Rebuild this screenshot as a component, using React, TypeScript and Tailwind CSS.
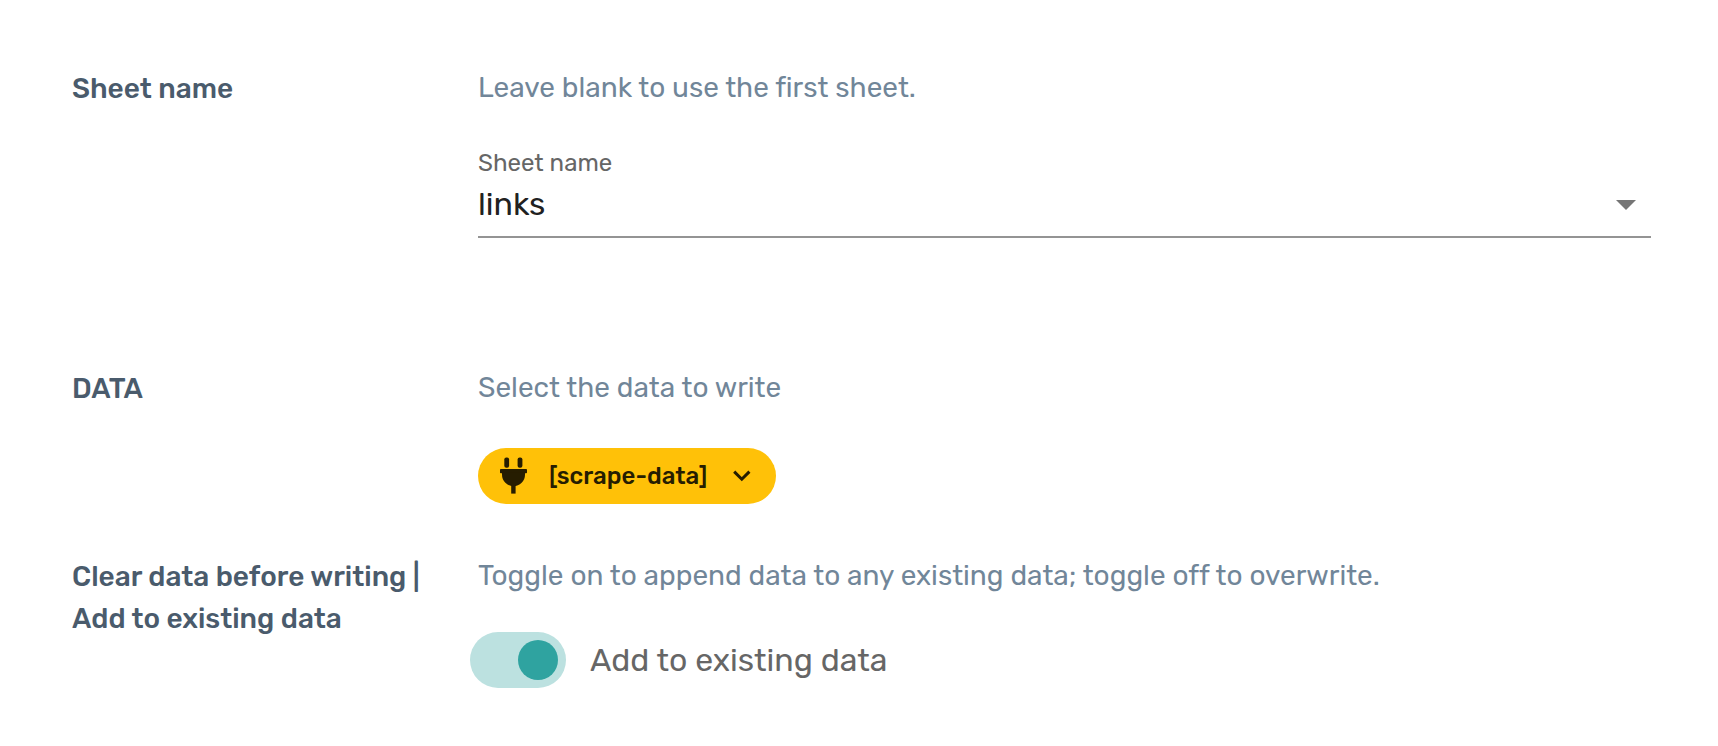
import { useState } from 'react'
import type { ReactNode } from 'react'

function PlugIcon() {
  return (
    <svg width="28" height="38" viewBox="0 0 28 38" fill="currentColor" aria-hidden="true">
      <rect x="4.3" y="0.5" width="4.8" height="10.2" rx="2" />
      <rect x="17.6" y="0.5" width="4.8" height="10.2" rx="2" />
      <rect x="0" y="12" width="27" height="4.2" rx="0.8" />
      <path d="M2 15.5h23v2.2A11.5 11.5 0 0 1 13.5 29.2 11.5 11.5 0 0 1 2 17.7z" />
      <rect x="11.2" y="28" width="4.4" height="8.6" />
    </svg>
  )
}

function ChevronIcon() {
  return (
    <svg className="ml-auto" width="18" height="12" viewBox="0 0 18 12" fill="none" aria-hidden="true">
      <path d="M1.2 1.6 8.8 9.2l7.6-7.6" stroke="currentColor" strokeWidth="3" />
    </svg>
  )
}

function SettingRow({ title, hint, children }: { title: ReactNode; hint: string; children: ReactNode }) {
  return (
    <section className="grid grid-cols-[360px_1fr] gap-x-[46px]">
      <h2 className="text-[28px] leading-[42px] font-medium text-[#4a5b6c]">{title}</h2>
      <div>
        <p className="text-[28px] leading-10 text-[#718699] [font-variant-ligatures:none]">{hint}</p>
        {children}
      </div>
    </section>
  )
}

export default function App() {
  const [sheet, setSheet] = useState('links')
  const [append, setAppend] = useState(true)

  return (
    <main className="flex flex-col bg-white pt-[68px] pr-[67px] pb-14 pl-[72px] font-[Rubik,Roboto,sans-serif]">
      <SettingRow title="Sheet name" hint="Leave blank to use the first sheet.">
        <div className="mt-10 mb-[130px] border-b-2 border-[#949494]">
          <label htmlFor="sheet" className="block text-2xl leading-[30px] text-[#666]">
            Sheet name
          </label>
          <div className="relative pt-0.5">
            <select
              id="sheet"
              value={sheet}
              onChange={(e) => setSheet(e.target.value)}
              className="block h-14 w-full appearance-none bg-transparent pb-2 text-[32px] text-[#212121] outline-none"
            >
              <option value="links">links</option>
            </select>
            <svg
              className="pointer-events-none absolute top-[22px] right-[15px]"
              width="20"
              height="10"
              viewBox="0 0 20 10"
              aria-hidden="true"
            >
              <path d="M0 0h20L10 10z" fill="#757575" />
            </svg>
          </div>
        </div>
      </SettingRow>

      <SettingRow title="DATA" hint="Select the data to write">
        <button
          type="button"
          className="mt-10 mb-[52px] flex h-14 w-[298px] items-center gap-[21px] rounded-full bg-[#ffc108] pr-[25px] pl-[22px] text-2xl font-medium text-[#261d01]"
        >
          <PlugIcon />
          [scrape-data]
          <ChevronIcon />
        </button>
      </SettingRow>

      <SettingRow
        title={
          <>
            Clear data before writing |<br />
            Add to existing data
          </>
        }
        hint="Toggle on to append data to any existing data; toggle off to overwrite."
      >
        <div className="mt-9 -ml-2 flex items-center gap-6">
          <input
            id="append"
            type="checkbox"
            role="switch"
            checked={append}
            onChange={(e) => setAppend(e.target.checked)}
            className="flex h-14 w-24 appearance-none items-center rounded-full bg-gray-300 p-2 before:size-10 before:rounded-full before:bg-gray-500 checked:justify-end checked:bg-[#bce1e0] checked:before:bg-[#2fa3a0]"
          />
          <label htmlFor="append" className="text-[32px] leading-10 text-[#666]">
            Add to existing data
          </label>
        </div>
      </SettingRow>
    </main>
  )
}
